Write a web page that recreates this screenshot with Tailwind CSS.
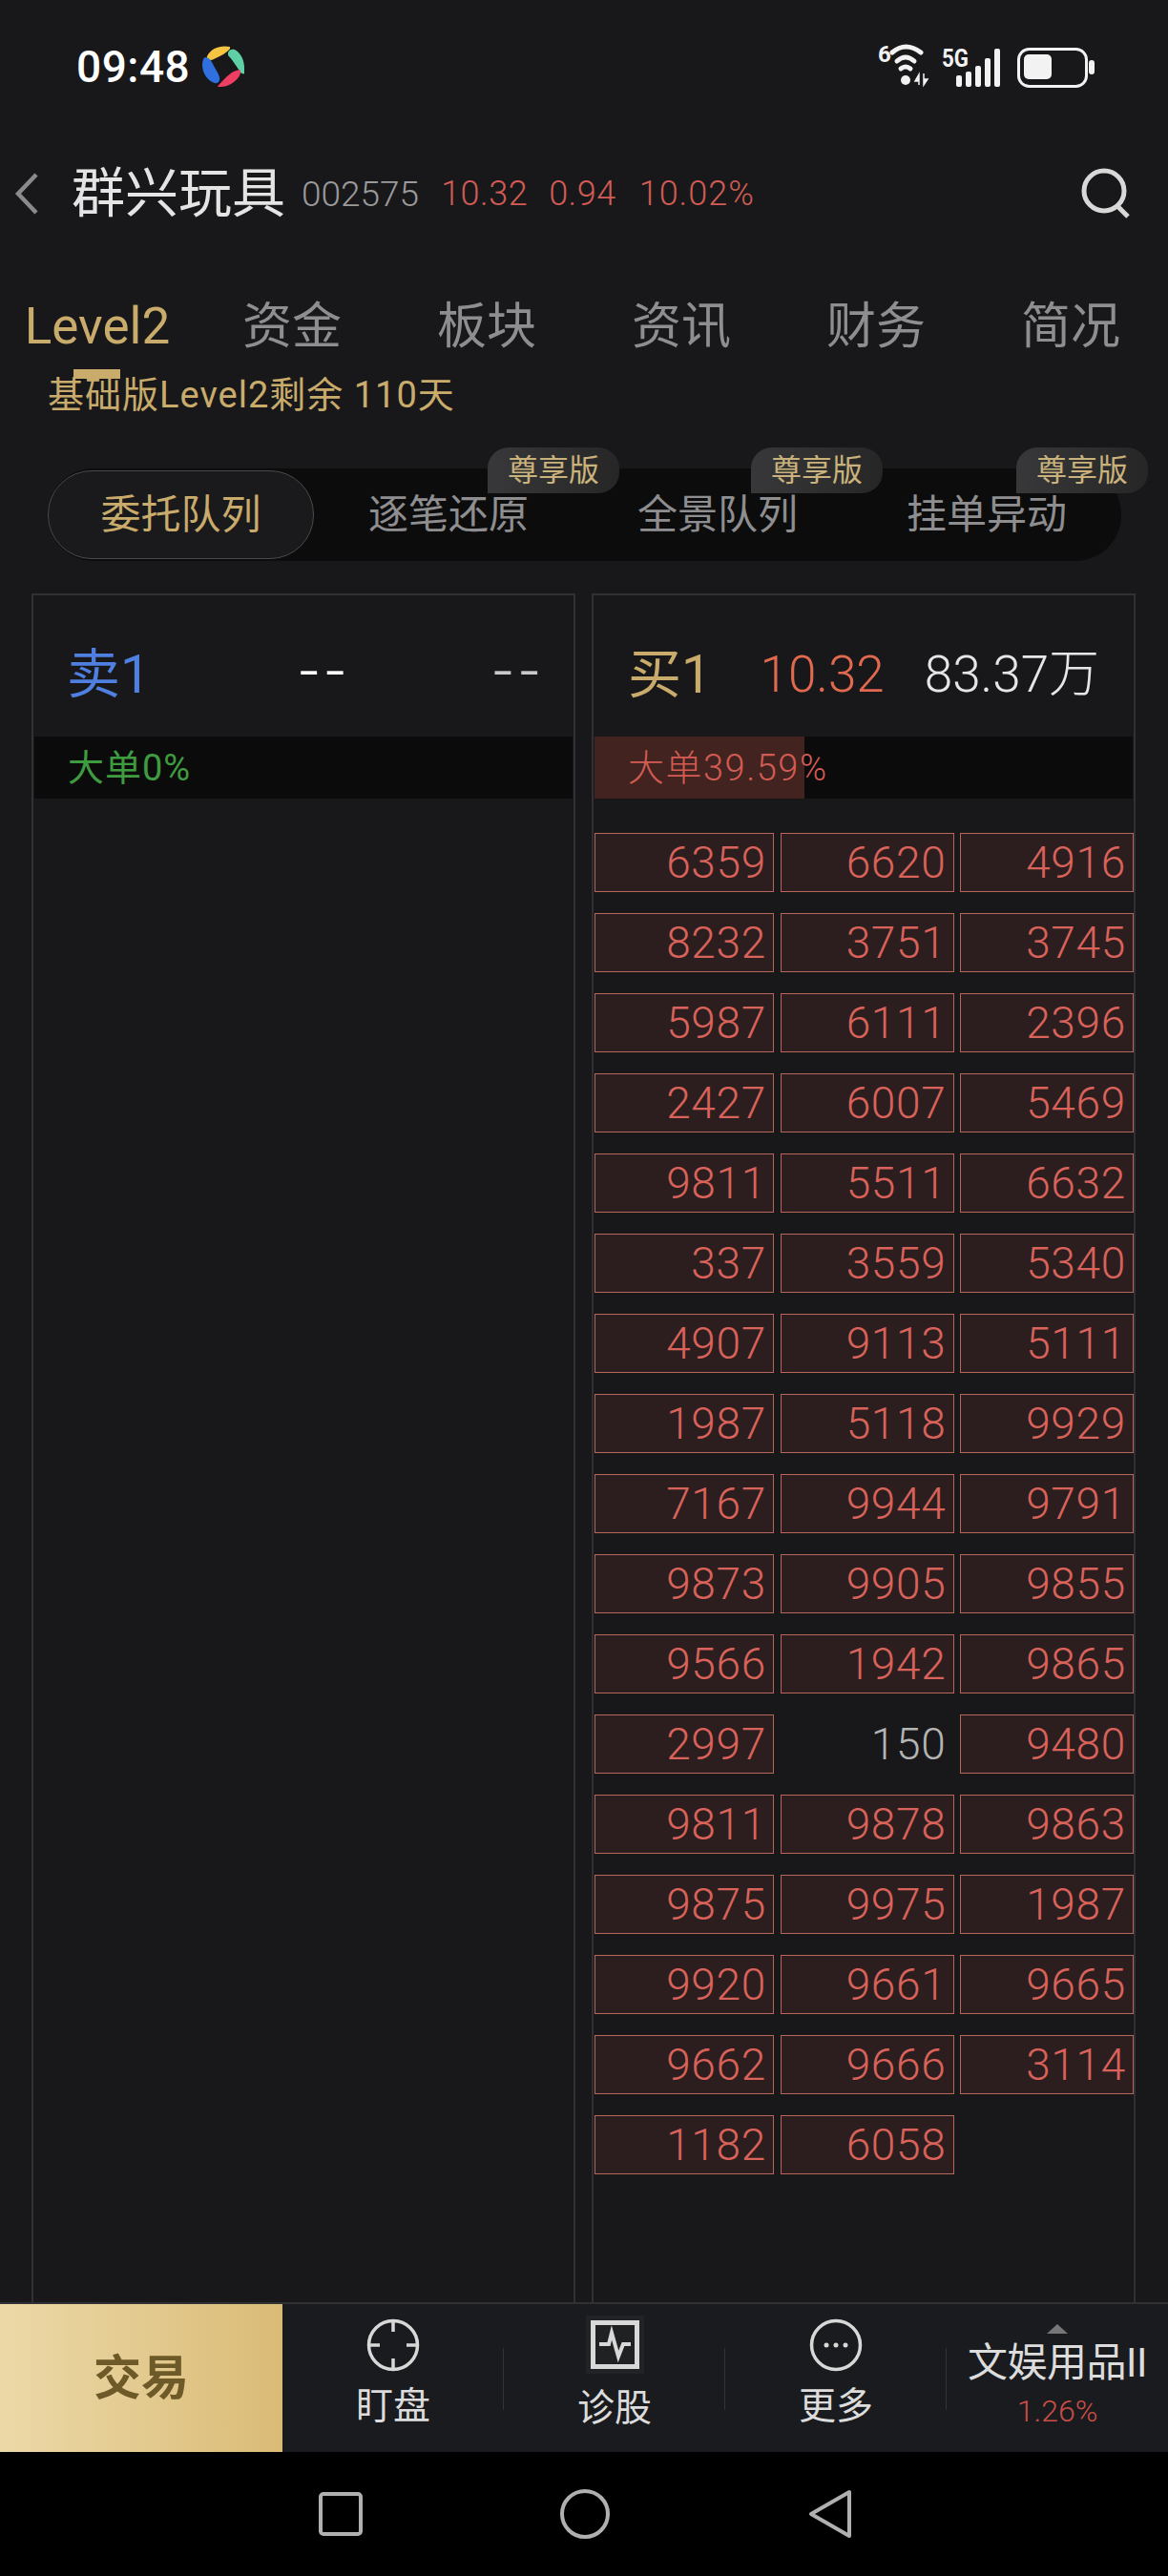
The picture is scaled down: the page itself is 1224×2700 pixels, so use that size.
<!DOCTYPE html>
<html lang="zh-CN">
<head>
    <meta charset="UTF-8">
    <meta name="viewport" content="width=device-width, initial-scale=1.0">
    <title>群兴玩具</title>
    <script src="https://cdn.jsdelivr.net/npm/@tailwindcss/browser@4"></script>
</head>
<body class="w-[1224px] h-[2700px] overflow-hidden bg-[#18181a] font-['Roboto','Noto_Sans_CJK_SC',sans-serif]">

    <!-- status bar -->
    <div class="h-[140px] flex items-center relative">
        <span class="ml-[80px] text-[46px] leading-none font-medium text-white tracking-[0.5px]">09:48</span>
        <svg class="ml-[13px] w-[44px] h-[44px]" viewBox="0 0 44 44">
            <path d="M29 1C20-1 9 2 5 11c-1 4 4 5 7 3 7-3 14-7 17-11z" fill="#f5c542"/>
            <path d="M27 7c1-3 4-4 7-3 7 4 11 12 10 25 0 1-3 0-4-1-4-6-8-13-13-18z" fill="#5fd0a5"/>
            <path d="M3 12c4 0 6 3 8 7 2 5 6 9 7 14 1 4-2 7-5 6C6 37 0 29 0 20c0-4 1-7 3-8z" fill="#2f6fe0"/>
            <path d="M40 26c1 5-5 12-12 15-4 2-8 2-12 2 1-2 4-5 7-8 4-4 8-8 13-9 2-1 4-1 4 0z" fill="#ee3f62"/>
        </svg>
        <svg class="ml-auto mr-[60px] w-[244px] h-[60px]" viewBox="0 0 244 60">
            <text x="0" y="25" font-size="24" font-weight="700" fill="#f2f2f2" font-family="Roboto">6</text>
            <g fill="none" stroke="#f2f2f2" stroke-width="5" stroke-linecap="round">
                <path d="M15 15Q29 3 45 15"/>
                <path d="M20 24Q29 16 38 24"/>
                <path d="M24 32Q29 28 34 32"/>
            </g>
            <circle cx="29" cy="44" r="5" fill="#f2f2f2"/>
            <path d="M43 49V38l-4 7h4M48 37v12l4-6h-4" fill="#f2f2f2" stroke="#f2f2f2" stroke-width="1.500"/>
            <text x="67" y="30" font-size="26" font-weight="700" fill="#f2f2f2" font-family="Roboto" textLength="28" lengthAdjust="spacingAndGlyphs">5G</text>
            <g fill="#f2f2f2">
                <rect x="82" y="39" width="6" height="12" rx="2"/>
                <rect x="92" y="35" width="6" height="16" rx="2"/>
                <rect x="102" y="29" width="6" height="22" rx="2"/>
                <rect x="112" y="21" width="6" height="30" rx="2"/>
                <rect x="122" y="11" width="6" height="40" rx="2"/>
            </g>
            <rect x="147.500" y="11.500" width="71" height="39" rx="11" fill="none" stroke="#f2f2f2" stroke-width="3"/>
            <rect x="153" y="17" width="29" height="26" rx="5" fill="#f2f2f2"/>
            <rect x="221" y="23" width="6" height="15" rx="3" fill="#f2f2f2"/>
        </svg>
    </div>

    <!-- title -->
    <div class="h-[126px] flex items-center relative">
        <svg class="ml-[14px] w-[28px] h-[46px]" viewBox="0 0 28 46">
            <path d="M24 3L5 23l19 20" fill="none" stroke="#8a8a8c" stroke-width="4.500"/>
        </svg>
        <span class="ml-[33px] text-[56px] leading-none text-[#e4e4e4]">群兴玩具</span>
        <span class="ml-[17px] text-[37px] leading-none font-light text-[#9a9a9c]">002575</span>
        <span class="ml-[23px] text-[36px] leading-none font-light text-[#d25c54] tracking-[0.5px]">10.32</span>
        <span class="ml-[22px] text-[36px] leading-none font-light text-[#d25c54] tracking-[0.5px]">0.94</span>
        <span class="ml-[24px] text-[36px] leading-none font-light text-[#d25c54] tracking-[1px]">10.02%</span>
        <svg class="ml-auto mr-[38px] w-[54px] h-[54px]" viewBox="0 0 54 54">
            <circle cx="25" cy="24" r="21" fill="none" stroke="#d8d8d8" stroke-width="5"/>
            <path d="M39 40l11 11" stroke="#d8d8d8" stroke-width="5"/>
        </svg>
    </div>

    <!-- tabs -->
    <div class="mt-[30px] h-[93px] grid grid-cols-6 items-center text-center text-[52px] leading-none text-[#8e8e90]">
        <span class="text-[53px] text-[#c9ab6c]">Level2</span>
        <span>资金</span>
        <span>板块</span>
        <span>资讯</span>
        <span>财务</span>
        <span>简况</span>
    </div>
    <div class="h-[50px] pl-[50px] flex items-center relative">
        <div class="absolute left-[77px] top-[-2px] w-[49px] h-[10px] bg-[#c9ab6c]"></div>
        <span class="relative text-[38px] leading-none text-[#c9ab6c] tracking-[1px]">基础版Level2剩余 110天</span>
    </div>

    <!-- queue type switch -->
    <div class="mt-[52px] ml-[50px] w-[1125px] h-[97px] flex items-center rounded-[48px] bg-[#0c0c0c] text-[42px] leading-none text-[#8e8e90] text-center">
        <div class="w-[279px] h-[93px] flex items-center justify-center rounded-[46px] border border-[#4a4a4a] bg-[#1a1a1c] text-[#c9ab6c]">委托队列</div>
        <div class="relative w-[282px]">逐笔还原
            <span class="absolute left-[182px] top-[-50px] w-[138px] h-[48px] flex items-center justify-center rounded-t-[22px] rounded-br-[22px] bg-gradient-to-r from-[#38383a] to-[#262626] text-[32px] text-[#c9b27c]">尊享版</span>
        </div>
        <div class="relative w-[282px]">全景队列
            <span class="absolute left-[176px] top-[-50px] w-[138px] h-[48px] flex items-center justify-center rounded-t-[22px] rounded-br-[22px] bg-gradient-to-r from-[#38383a] to-[#262626] text-[32px] text-[#c9b27c]">尊享版</span>
        </div>
        <div class="relative w-[282px]">挂单异动
            <span class="absolute left-[172px] top-[-50px] w-[138px] h-[48px] flex items-center justify-center rounded-t-[22px] rounded-br-[22px] bg-gradient-to-r from-[#38383a] to-[#262626] text-[32px] text-[#c9b27c]">尊享版</span>
        </div>
    </div>

    <!-- queues -->
    <div class="mt-[34px] ml-[33px] flex gap-[17px] h-[1791px]">
        <div class="w-[570px] border-2 border-b-0 border-[#303134]">
            <div class="h-[148px] pt-[18px] pl-[35px] flex items-center leading-none">
                <span class="text-[56px] text-[#4f7fe0]">卖1</span>
                <span class="ml-[156px] mb-[6px] text-[72px] font-light tracking-[7px] text-white">--</span>
                <span class="ml-[148px] mb-[6px] text-[72px] font-light tracking-[7px] text-[#c8c8c8]">--</span>
            </div>
            <div class="mx-px h-[65px] pl-[35px] flex items-center bg-[#0b0b0b] text-[38px] leading-none text-[#3f9b3f] tracking-[1px]">大单0%</div>
        </div>
        <div class="w-[570px] border-2 border-b-0 border-[#303134]">
            <div class="h-[148px] pt-[18px] pl-[36px] flex items-center leading-none">
                <span class="text-[56px] text-[#c9ab6c]">买1</span>
                <span class="ml-[51px] text-[53px] font-light text-[#e0694f]">10.32</span>
                <span class="ml-[42px] text-[53px] font-light text-[#e6e6e6]">83.37万</span>
            </div>
            <div class="relative mx-px h-[65px] pl-[35px] flex items-center bg-[#0b0b0b] text-[38px] leading-none font-light text-[#d25c54] tracking-[1.5px]">
                <div class="absolute left-0 top-0 h-full w-[220px] bg-[#42231f]"></div>
                <span class="relative">大单39.59%</span>
            </div>
            <div id="orders" class="mt-[36px] ml-px grid grid-cols-[188px_182px_182px] gap-x-[6.500px] gap-y-[22px]"></div>
        </div>
    </div>

    <!-- bottom toolbar -->
    <div class="h-[157px] flex border-t-2 border-[#303134] bg-[#1a1b1e]">
        <div class="w-[296px] flex items-center justify-center bg-gradient-to-r from-[#ecd9a8] to-[#dabb76] text-[50px] leading-none font-bold text-[#6e5a28]">交易</div>
        <div class="relative w-[232px] flex flex-col items-center pt-[15px]">
            <svg class="w-[56px] h-[56px]" viewBox="0 0 56 56">
                <circle cx="28" cy="28" r="25.500" fill="none" stroke="#d8d8d8" stroke-width="3.500"/>
                <path d="M28 3v11M28 42v11M3 28h11M42 28h11" stroke="#d8d8d8" stroke-width="3.500"/>
            </svg>
            <span class="mt-[17px] text-[39px] leading-none text-[#dcdcdc]">盯盘</span>
            <div class="absolute right-0 top-[46px] w-px h-[65px] bg-[#333336]"></div>
        </div>
        <div class="relative w-[232px] flex flex-col items-center pt-[12px]">
            <div class="w-[61px] h-[61px] flex items-center justify-center bg-[#222326]">
                <svg class="w-[51px] h-[51px]" viewBox="0 0 51 51">
                    <rect x="2.500" y="2.500" width="46" height="46" fill="#202123" stroke="#d8d8d8" stroke-width="5"/>
                    <path d="M9 25h10l3-12 7 25 5-13h8" fill="none" stroke="#d8d8d8" stroke-width="4"/>
                </svg>
            </div>
            <span class="mt-[17px] text-[39px] leading-none text-[#dcdcdc]">诊股</span>
            <div class="absolute right-0 top-[46px] w-px h-[65px] bg-[#333336]"></div>
        </div>
        <div class="relative w-[232px] flex flex-col items-center pt-[15px]">
            <svg class="w-[56px] h-[56px]" viewBox="0 0 56 56">
                <circle cx="28" cy="28" r="25.500" fill="none" stroke="#d8d8d8" stroke-width="3.500"/>
                <circle cx="18" cy="28" r="2.500" fill="#d8d8d8"/>
                <circle cx="28" cy="28" r="2.500" fill="#d8d8d8"/>
                <circle cx="38" cy="28" r="2.500" fill="#d8d8d8"/>
            </svg>
            <span class="mt-[17px] text-[39px] leading-none text-[#dcdcdc]">更多</span>
            <div class="absolute right-0 top-[46px] w-px h-[65px] bg-[#333336]"></div>
        </div>
        <div class="w-[232px] flex flex-col items-center pt-[21px]">
            <div class="w-0 h-0 border-x-[11px] border-x-transparent border-b-[10px] border-b-[#77777a]"></div>
            <span class="mt-[10px] text-[42px] leading-none text-[#dcdcdc] whitespace-nowrap tracking-[-0.5px]">文娱用品II</span>
            <span class="mt-[13px] text-[32px] leading-none font-light text-[#cc4e47]">1.26%</span>
        </div>
    </div>

    <!-- system navigation -->
    <div class="h-[130px] flex items-center bg-black">
        <svg class="ml-[334px] w-[46px] h-[46px]" viewBox="0 0 46 46">
            <rect x="2" y="2" width="42" height="42" rx="3" fill="none" stroke="#b0b0b0" stroke-width="4"/>
        </svg>
        <svg class="ml-[207px] w-[52px] h-[52px]" viewBox="0 0 52 52">
            <circle cx="26" cy="26" r="24" fill="none" stroke="#b0b0b0" stroke-width="4"/>
        </svg>
        <svg class="ml-[208px] w-[46px] h-[52px]" viewBox="0 0 46 52">
            <path d="M43 3v46L3 26z" fill="none" stroke="#b0b0b0" stroke-width="4" stroke-linejoin="round"/>
        </svg>
    </div>

    <script>
        const rows = [
            [6359, 6620, 4916], [8232, 3751, 3745], [5987, 6111, 2396], [2427, 6007, 5469],
            [9811, 5511, 6632], [337, 3559, 5340], [4907, 9113, 5111], [1987, 5118, 9929],
            [7167, 9944, 9791], [9873, 9905, 9855], [9566, 1942, 9865], [2997, 150, 9480],
            [9811, 9878, 9863], [9875, 9975, 1987], [9920, 9661, 9665], [9662, 9666, 3114],
            [1182, 6058]
        ];
        const orders = document.getElementById('orders');
        rows.flat().forEach(volume => {
            const cell = document.createElement('div');
            // small orders are drawn without the big-order box
            cell.className = volume < 200
                ? 'h-[62px] pr-[8px] flex items-center justify-end text-[46px] leading-none font-light tracking-[0.7px] text-[#b4b4b4]'
                : 'h-[62px] pr-[7px] flex items-center justify-end border border-[#b5685a] bg-[#2c1e1e] text-[46px] leading-none font-light tracking-[0.7px] text-[#d9625a]';
            cell.textContent = volume;
            orders.appendChild(cell);
        });
    </script>
</body>
</html>
